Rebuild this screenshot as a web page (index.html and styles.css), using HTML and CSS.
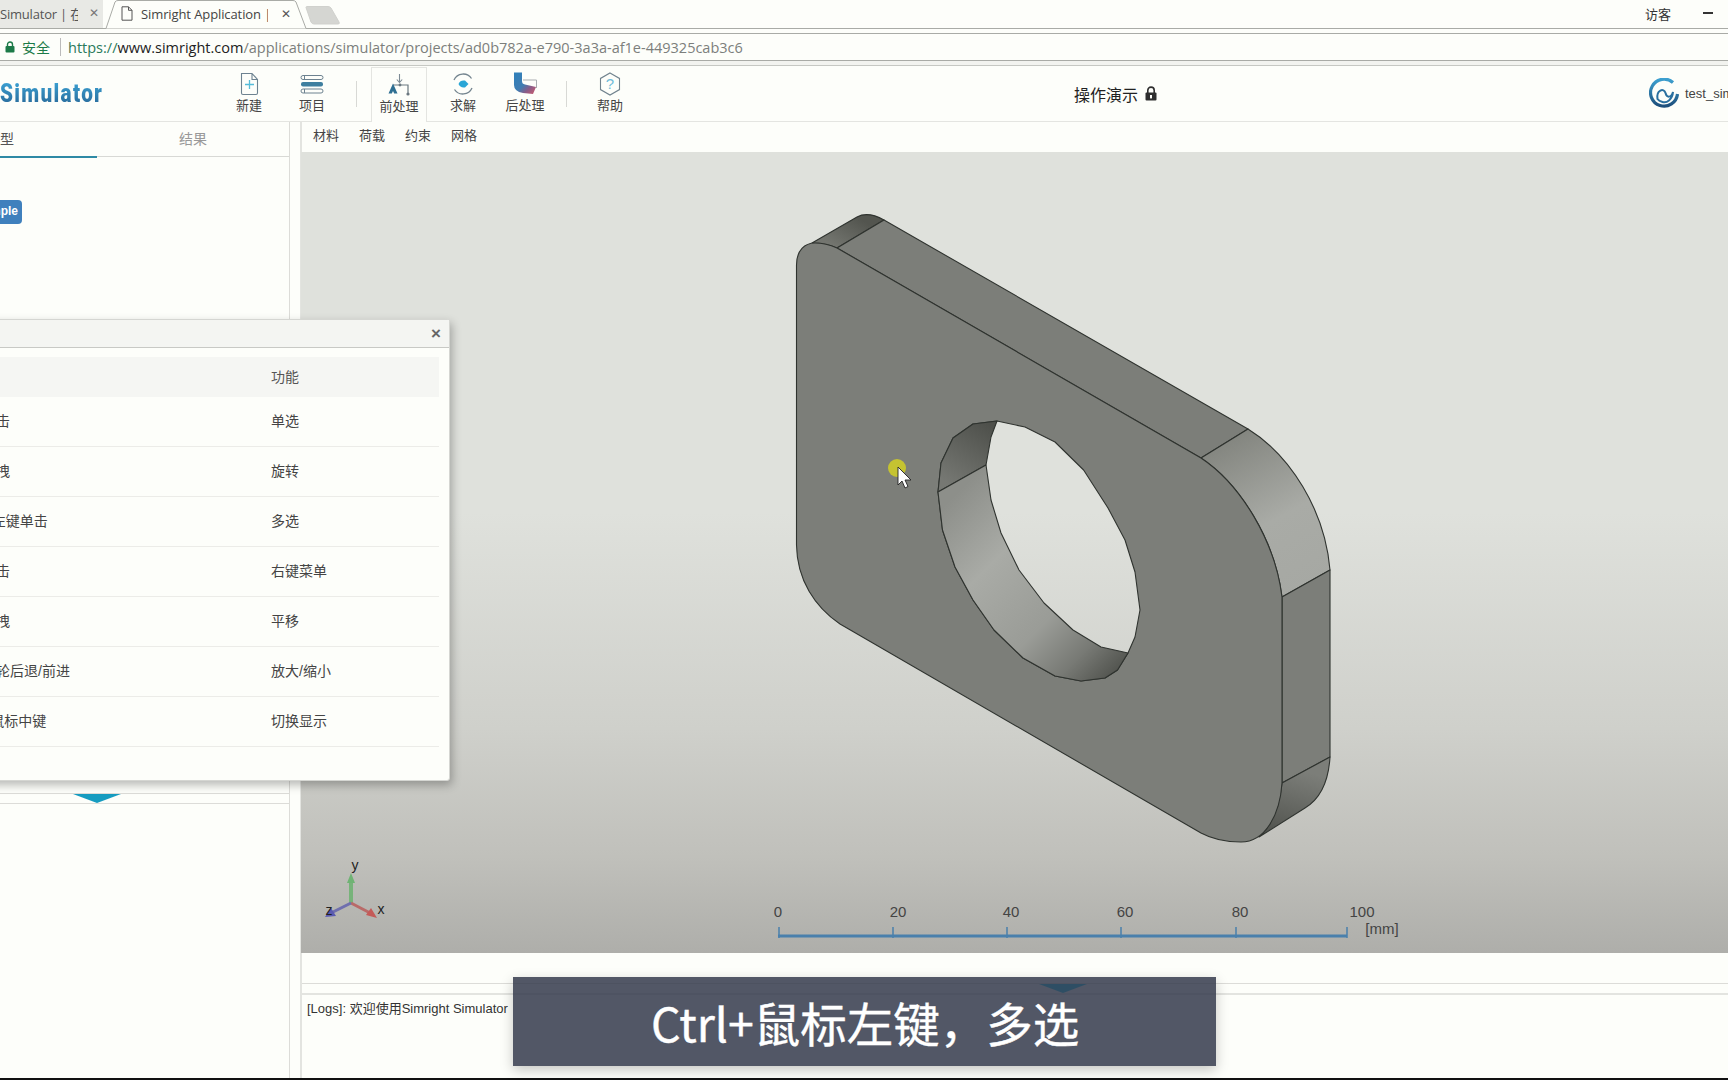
FILE: index.html
```html
<!DOCTYPE html>
<html lang="zh">
<head>
<meta charset="utf-8">
<title>Simright Application</title>
<link rel="stylesheet" href="styles.css">
</head>
<body>
<div class="page">
  <header class="tabstrip">
    <div class="tab tab-inactive">
      <span class="tab-title tab-title-short">Simulator | 在</span>
      <span class="tab-close">✕</span>
    </div>
    <div class="tab tab-active">
      <svg class="tab-shape" viewBox="0 0 205 29" preserveAspectRatio="none"><path d="M0 28.5 H3 L12 2 Q13 .5 15 .5 H190 Q192 .5 193 2 L203 28.5 H205" fill="#fdfefa" stroke="#a9aba6"/></svg>
      <svg class="doc-icon" viewBox="0 0 12 15"><path d="M1 .8 H7.5 L11 4.3 V14.2 H1 Z M7.5 .8 V4.3 H11" fill="none" stroke="#555" stroke-width="1"/></svg>
      <span class="tab-title tab-title-main">Simright Application | S</span>
      <span class="tab-close">✕</span>
    </div>
    <svg class="newtab" viewBox="0 0 35 19"><path d="M1 1.5 Q1 .5 2 .5 H23 Q25 .5 26 2 L34 16 Q35 18 33 18 H9 Q7 18 6 16 Z" fill="#d5d6d2" stroke="#d0d1cd"/></svg>
    <div class="window-tools">
      <span class="visitor">访客</span>
      <span class="minimize"></span>
    </div>
  </header>

  <div class="addressbar">
    <svg class="secure-lock" viewBox="0 0 10 12"><path d="M2.5 5 V3.5 a2.5 2.5 0 0 1 5 0 V5" fill="none" stroke="#1c7a48" stroke-width="1.4"/><rect x=".5" y="5" width="9" height="6.5" rx="1" fill="#1c7a48"/></svg>
    <span class="secure-label">安全</span>
    <span class="addr-sep"></span>
    <span class="url"><span class="url-scheme">https://</span><span class="url-host">www.simright.com</span>/applications/simulator/projects/ad0b782a-e790-3a3a-af1e-449325cab3c6</span>
  </div>
  <div class="chrome-gap"></div>

  <nav class="toolbar">
    <div class="logo">Simulator</div>
    <div class="tools">
      <div class="tool tool-new">
        <svg class="tool-icon" viewBox="0 0 24 24"><path d="M4.5 1.5 H15 L20.5 7.5 V21 Q20.5 22.5 19 22.5 H6 Q4.5 22.5 4.5 21 Z M15 1.5 V7.5 H20.5" fill="#fdfefa" stroke="#6d8290" stroke-width="1.1"/><path d="M12.5 8 V17 M8 12.5 H17" stroke="#55bcd9" stroke-width="1.3"/></svg>
        <span class="tool-label">新建</span>
      </div>
      <div class="tool tool-proj">
        <svg class="tool-icon" viewBox="0 0 24 24"><rect x="1" y="3.5" width="22" height="4" rx="2" fill="#fdfefa" stroke="#6d8290"/><rect x="1" y="10" width="22" height="4.4" rx="2" fill="#3e7f9f"/><rect x="1" y="17" width="22" height="4" rx="2" fill="#fdfefa" stroke="#6d8290"/><path d="M4.5 3.5 V7.5 M4.5 17 V21" stroke="#6d8290"/></svg>
        <span class="tool-label">项目</span>
      </div>
      <span class="tool-sep tool-sep-a"></span>
      <div class="tool tool-active">
        <svg class="tool-icon" viewBox="0 0 24 24"><path d="M12.5 1 V9 M9.8 6.5 L12.5 9.5 L15.2 6.5" fill="none" stroke="#7c8a94" stroke-width="1.1"/><path d="M6 12 H21 V21" fill="none" stroke="#6b7880" stroke-width="1.2"/><path d="M6 10.5 L10.5 20.5 H7.2 L6 18 L4.8 20.5 H1.5 Z" fill="#2e6f92"/><circle cx="21" cy="21" r="1.6" fill="#6b7880"/><circle cx="13" cy="12" r="1.4" fill="#6b7880"/></svg>
        <span class="tool-label">前处理</span>
      </div>
      <div class="tool tool-solve">
        <svg class="tool-icon" viewBox="0 0 24 24"><path d="M20.5 6.5 A10 10 0 0 0 3 8 M3.5 17.5 A10 10 0 0 0 21 16" fill="none" stroke="#74858f" stroke-width="1.3"/><path d="M7.5 12 Q9 8.6 12.5 8.6 H14 L17.5 12 L14 15.4 H12.5 Q9 15.4 7.5 12 Z" fill="#2aa6d6"/></svg>
        <span class="tool-label">求解</span>
      </div>
      <div class="tool tool-post">
        <svg class="tool-icon" viewBox="0 0 24 24"><defs><linearGradient id="postGrad" x1="0" y1="0" x2="1" y2="1"><stop offset="0" stop-color="#2e80ba"/><stop offset=".5" stop-color="#3f7db2"/><stop offset=".72" stop-color="#8a5c88"/><stop offset="1" stop-color="#d05b6c"/></linearGradient></defs><path d="M10 8 H23.5 V16" fill="none" stroke="#a9adb0"/><path d="M1 .5 H9 V9 Q9 12 12 12.5 L23 15 L20 22 L10 21 Q1 19.5 1 13 Z" fill="url(#postGrad)"/></svg>
        <span class="tool-label">后处理</span>
      </div>
      <span class="tool-sep tool-sep-b"></span>
      <div class="tool tool-help">
        <svg class="tool-icon" viewBox="0 0 24 24"><path d="M12 1 L21.5 6.4 V17.6 L12 23 L2.5 17.6 V6.4 Z" fill="#fdfefa" stroke="#71838e" stroke-width="1.1"/><text x="12" y="16.5" text-anchor="middle" class="help-mark">?</text></svg>
        <span class="tool-label">帮助</span>
      </div>
    </div>
    <div class="project-title">
      <span>操作演示</span>
      <svg class="title-lock" viewBox="0 0 12 15"><path d="M2.8 7 V4.3 a3.2 3.2 0 0 1 6.4 0 V7" fill="none" stroke="#2e2e2e" stroke-width="1.6"/><rect x=".5" y="6.5" width="11" height="8" rx="1" fill="#2e2e2e"/><rect x="5" y="9" width="2" height="3.4" fill="#fdfefa"/></svg>
    </div>
    <div class="user">
      <svg class="user-logo" viewBox="0 0 30 32"><defs><linearGradient id="swirl" x1="0" y1="0" x2="0" y2="1"><stop offset="0" stop-color="#3da0d0"/><stop offset="1" stop-color="#1d4f7c"/></linearGradient></defs><path d="M24 4.5 A13.5 13.5 0 1 0 28.5 16" fill="none" stroke="url(#swirl)" stroke-width="3.2"/><path d="M8.5 21 C7 12 15 9.5 16.5 15 C17.8 20 22 20 24 14 C23.5 21 18 25.5 13.5 24 C11 23.3 9.5 22.5 8.5 21 Z" fill="#fdfefa" stroke="#2a6f9f" stroke-width="2"/></svg>
      <span class="user-name">test_simright</span>
    </div>
  </nav>

  <main class="workspace">
    <aside class="sidebar">
      <div class="side-tabs">
        <span class="side-tab side-tab-active">模型</span>
        <span class="side-tab">结果</span>
      </div>
      <div class="side-tree">
        <span class="tree-tag">Sample</span>
      </div>
      <div class="side-split"><span class="split-arrow"></span></div>
      <div class="side-props"></div>
    </aside>

    <section class="stage">
      <div class="menu-row">
        <span>材料</span><span>荷载</span><span>约束</span><span>网格</span>
      </div>
      <div class="viewport">
        <svg class="model" viewBox="301 152 1427 801">
          <defs>
            <linearGradient id="cTop" gradientUnits="userSpaceOnUse" x1="838" y1="248" x2="857" y2="217"><stop offset="0" stop-color="#73756f"/><stop offset="1" stop-color="#53554f"/></linearGradient>
            <linearGradient id="cRight" gradientUnits="userSpaceOnUse" x1="1225" y1="440" x2="1305" y2="590"><stop offset="0" stop-color="#83857f"/><stop offset=".55" stop-color="#a9aba6"/><stop offset="1" stop-color="#a6a8a3"/></linearGradient>
            <linearGradient id="cBot" gradientUnits="userSpaceOnUse" x1="1300" y1="770" x2="1280" y2="840"><stop offset="0" stop-color="#7c7e79"/><stop offset="1" stop-color="#4f514c"/></linearGradient>
            <linearGradient id="cHoleA" gradientUnits="userSpaceOnUse" x1="950" y1="485" x2="990" y2="425"><stop offset="0" stop-color="#767873"/><stop offset="1" stop-color="#4e504b"/></linearGradient>
            <linearGradient id="cHoleB" gradientUnits="userSpaceOnUse" x1="950" y1="500" x2="1125" y2="675"><stop offset="0" stop-color="#8d8f8a"/><stop offset=".3" stop-color="#a9aba6"/><stop offset=".62" stop-color="#9a9c97"/><stop offset=".82" stop-color="#777974"/><stop offset="1" stop-color="#4a4c47"/></linearGradient>
          </defs>
          <g stroke="#2f332f" stroke-width="1.1" stroke-linejoin="round">
            <path d="M812 243 L857 217 Q868 211 884 220 L837 248 Q825 243 812 243 Z" fill="url(#cTop)"/>
            <path d="M884 220 L1248 429 L1201 458 L837 248 Z" fill="#7c7e79"/>
            <path d="M1248 429 C1290 455 1325 510 1330 570 L1282 597 C1275 540 1240 484 1201 458 Z" fill="url(#cRight)"/>
            <path d="M1330 570 V757 L1282 783 V597 Z" fill="#7c7e79"/>
            <path d="M1330 757 C1328 790 1315 802 1305 808 L1259 837 C1270 828 1280 805 1282 783 Z" fill="url(#cBot)"/>
            <path fill-rule="evenodd" fill="#7c7e79" d="M796.5 265 C796.5 250 805 243 815 243 Q826 243 837 248 L1201 458 C1240 484 1275 540 1282 597 V783 C1280 815 1265 842 1241 842 C1228 842 1212 839 1201 833 L840 624 C815 607 797 580 796.5 545 Z M997 421 L973 424 L953 438 L941 463 L938 492 L942.5 530 L955 567 L973 600 L994 630 L1023 658 L1055 676 L1081 681 L1105 678 L1117.5 670 L1128 653 L1135 637 L1140 610 L1135 572 L1125 540 L1108 508 L1083.6 470 L1055 442 L1025 427 Z"/>
            <path d="M997 421 L973 424 L953 438 L941 463 L938 492 L986 465 L991 437 Z" fill="url(#cHoleA)"/>
            <path d="M938 492 L942.5 530 L955 567 L973 600 L994 630 L1023 658 L1055 676 L1081 681 L1105 678 L1117.5 670 L1128 653 L1101 647 L1073 630 L1044 603 L1019 570 L1001 533 L991 500 L986 465 Z" fill="url(#cHoleB)"/>
          </g>
          <circle cx="897" cy="468" r="9" fill="#c5c331"/>
          <path d="M898 467 V485 L902 481 L905 488 L908 486.5 L905 480 L911 480 Z" fill="#fff" stroke="#222" stroke-width=".9"/>
          <g class="axes">
            <path d="M351 903 V881" stroke="#77b37a" stroke-width="4"/><path d="M351 873 L355 883 H347 Z" fill="#6fb374"/>
            <path d="M351 903 L372 914" stroke="#b96a68" stroke-width="3"/><path d="M377 918 L366 915 L371 908 Z" fill="#c45a58"/>
            <path d="M351 903 L331 913" stroke="#6f6fae" stroke-width="3"/><path d="M325 917 L336 916 L331 908 Z" fill="#5a5ab0"/>
            <text x="355" y="870" class="axis-label" text-anchor="middle">y</text>
            <text x="381" y="914" class="axis-label" text-anchor="middle">x</text>
            <text x="329" y="915" class="axis-label" text-anchor="middle">z</text>
          </g>
          <g class="scale">
            <path d="M778 936 H1347 M779 927 V938 M893 927 V938 M1007 927 V938 M1121 927 V938 M1236 927 V938 M1347 927 V938" fill="none" stroke="#4a80ac" stroke-width="1.5"/>
            <path d="M778 936 H1347" stroke="#4a80ac" stroke-width="3"/>
            <text x="778" y="917" class="scale-label" text-anchor="middle">0</text>
            <text x="898" y="917" class="scale-label" text-anchor="middle">20</text>
            <text x="1011" y="917" class="scale-label" text-anchor="middle">40</text>
            <text x="1125" y="917" class="scale-label" text-anchor="middle">60</text>
            <text x="1240" y="917" class="scale-label" text-anchor="middle">80</text>
            <text x="1362" y="917" class="scale-label" text-anchor="middle">100</text>
            <text x="1382" y="934" class="scale-label scale-unit" text-anchor="middle">[mm]</text>
          </g>
        </svg>
      </div>
      <div class="strip"></div>
      <div class="log-split"><span class="split-arrow split-arrow-log"></span></div>
      <div class="logs">[Logs]: 欢迎使用Simright Simulator</div>
    </section>
  </main>
  <div class="floor"></div>

  <section class="dialog">
    <div class="dialog-head"><span class="dialog-close">×</span></div>
    <div class="dialog-body">
      <div class="row row-head"><span class="cell-a">操作</span><span>功能</span></div>
      <div class="row"><span class="cell-a">左键单击</span><span>单选</span></div>
      <div class="row"><span class="cell-a">左键拖拽</span><span>旋转</span></div>
      <div class="row"><span class="cell-a">Ctrl + 左键单击</span><span>多选</span></div>
      <div class="row"><span class="cell-a">右键单击</span><span>右键菜单</span></div>
      <div class="row"><span class="cell-a">右键拖拽</span><span>平移</span></div>
      <div class="row"><span class="cell-a">鼠标滚轮后退/前进</span><span>放大/缩小</span></div>
      <div class="row"><span class="cell-a">Shift+鼠标中键</span><span>切换显示</span></div>
    </div>
  </section>

  <div class="caption">Ctrl+鼠标左键，多选</div>
</div>
</body>
</html>
```
FILE: styles.css
```css
* { box-sizing: border-box; }
html, body { margin: 0; padding: 0; height: 100%; overflow: hidden; }
body { background: #fdfefa; color: #333; font-family: "Liberation Sans", "Noto Sans CJK SC", sans-serif; font-size: 13px; }
.page { position: relative; width: 1728px; height: 1080px; overflow: hidden; display: flex; flex-direction: column; }

/* browser chrome */
.tabstrip { height: 29px; flex: none; display: flex; align-items: stretch; position: relative; border-bottom: 1px solid #a9aba6; }
.tab { display: flex; align-items: center; position: relative; padding-bottom: 2px; font-family: "Open Sans", "Noto Sans CJK SC", sans-serif; font-size: 13px; color: #444; }
.tab-inactive { width: 103px; background: #e8e9e5; flex: none; }
.tab-active { width: 205px; flex: none; margin-bottom: -1px; }
.tab-shape { position: absolute; left: 0; top: 0; width: 100%; height: 100%; }
.doc-icon { position: relative; width: 12px; height: 15px; margin-left: 18px; flex: none; }
.tab-title { position: relative; white-space: nowrap; overflow: hidden; }
.tab-title-short { width: 78px; color: #555; letter-spacing: -.2px; }
.tab-title-main { width: 127px; margin-left: 8px; letter-spacing: -.1px; }
.tab-close { position: relative; font-size: 12px; color: #555; font-family: "DejaVu Sans", sans-serif; font-weight: 700; }
.tab-inactive .tab-close { margin-left: 11px; color: #777; }
.tab-active .tab-close { margin-left: 13px; }
.newtab { width: 35px; height: 19px; margin: 6px 0 0 -3px; flex: none; }
.window-tools { margin-left: auto; display: flex; align-items: center; padding: 0 15px 2px 0; }
.visitor { font-size: 13px; color: #333; width: 28px; }
.minimize { width: 10px; height: 2px; background: #333; margin-left: 30px; }

.addressbar { height: 28px; flex: none; display: flex; align-items: center; padding: 0 0 0 5px; border-top: 1px solid #a9aba6; border-bottom: 1px solid #a9aba6; margin-top: 4px; }
.secure-lock { width: 10px; height: 12px; flex: none; }
.secure-label { color: #1c7a48; margin-left: 7px; font-size: 14px; }
.addr-sep { width: 1px; height: 18px; background: #bbb; margin: 0 7px 0 10px; }
.url { font-family: "Open Sans", sans-serif; font-size: 14.5px; color: #7c7f7c; }
.url-scheme { color: #2b7a5b; }
.url-host { color: #222; }
.chrome-gap { height: 5px; flex: none; background: #f2f3ef; border-bottom: 1px solid #c6c8c3; }

/* app toolbar */
.toolbar { height: 56px; flex: none; display: flex; align-items: stretch; border-bottom: 1px solid #e4e5e1; background: #fdfefa; }
.logo { width: 227px; flex: none; padding-top: 13px; font-family: "Roboto", sans-serif; font-weight: 900; font-size: 25px; letter-spacing: 1.6px; transform: scaleX(.83); transform-origin: left center; line-height: 30px; background: linear-gradient(180deg, transparent 12px, #3a9ed0 17px, #2a6f9f 37px); -webkit-background-clip: text; background-clip: text; color: transparent; }
.tools { display: flex; align-items: stretch; width: 400px; flex: none; }
.tool { display: flex; flex-direction: column; align-items: center; width: 62px; flex: none; padding-top: 6px; margin-left: 1px; }
.tool-icon { width: 24px; height: 24px; flex: none; }
.tool-label { font-size: 13px; line-height: 18px; color: #444; font-family: "Noto Sans CJK SC", sans-serif; }
.tool-sep { width: 1px; height: 26px; background: #d8d9d5; margin: 15px 14px 0 13px; flex: none; }
.tool-sep-b { margin: 15px 12px 0 10px; }
.tool-new { margin-left: -9px; }
.tool-proj { margin-left: 1px; }
.tool-active { width: 56px; margin-left: 0; height: 55px; margin-top: 1px; padding-top: 5px; background: #fdfefa; border: 1px solid #e4e5e1; border-bottom: 0; position: relative; z-index: 1; }
.tool-solve { margin-left: 5px; }
.tool-post { margin-left: 0; }
.tool-help { margin-left: 0; }
.help-mark { font-size: 15px; fill: #6fbcd9; font-family: "Liberation Sans", sans-serif; }
.project-title { margin-left: 447px; width: 100px; display: flex; align-items: center; flex: none; font-size: 16px; color: #222; font-family: "Noto Sans CJK SC", sans-serif; }
.project-title span { white-space: nowrap; }
.title-lock { width: 12px; height: 15px; margin-left: 7px; flex: none; }
.user { margin-left: 475px; display: flex; align-items: center; flex: none; }
.user-logo { width: 30px; height: 32px; flex: none; }
.user-name { margin-left: 6px; color: #444; font-size: 13px; white-space: nowrap; }

/* workspace */
.workspace { flex: 1; min-height: 0; display: flex; }
.sidebar { width: 290px; flex: none; display: flex; flex-direction: column; border-right: 1px solid #dcdcd8; }
.side-tabs { height: 35px; flex: none; display: flex; border-bottom: 1px solid #d8d9d5; }
.side-tab { width: 96px; text-align: center; line-height: 34px; color: #999; font-size: 14px; flex: none; }
.side-tab-active { width: 97px; color: #555; text-align: left; text-indent: -14px; height: 36px; border-bottom: 2px solid #2e8aa5; }
.side-tab:not(.side-tab-active) { margin-left: 48px; }
.side-tree { flex: none; height: 636px; padding-top: 43px; overflow: hidden; }
.tree-tag { display: block; width: 22px; height: 24px; border-radius: 0 4px 4px 0; background: #3f80bd; color: #fff; font-weight: 700; font-size: 12px; line-height: 22px; direction: rtl; padding-right: 4px; overflow: hidden; white-space: nowrap; }
.side-split { height: 11px; flex: none; border-top: 1px solid #dcdcd8; border-bottom: 1px solid #dcdcd8; display: flex; padding-left: 73px; }
.split-arrow { display: block; width: 0; height: 0; border-left: 24px solid transparent; border-right: 24px solid transparent; border-top: 9px solid #169cc0; }
.side-props { flex: 1; }

.stage { flex: 1; min-width: 0; display: flex; flex-direction: column; margin-left: 10px; border-left: 2px solid #e3e4e0; }
.menu-row { height: 30px; flex: none; display: flex; gap: 20px; padding-left: 11px; align-items: center; line-height: 1; font-size: 13px; color: #444; }
.menu-row span { padding-bottom: 3px; }
.viewport { height: 801px; flex: none; margin-left: -1px; background: linear-gradient(180deg, #dfe1dc 0%, #dfe1dc 45%, #cfd0cb 72%, #c0c0bb 88%, #aeaeaa 100%); }
.model { display: block; width: 100%; height: 100%; }
.axis-label { font-size: 14px; font-family: "Liberation Sans", sans-serif; fill: #222; }
.scale-label { font-size: 15px; font-family: "Liberation Sans", sans-serif; fill: #444; }
.strip { height: 30px; flex: none; }
.log-split { height: 12px; flex: none; border-top: 1px solid #dcdcd8; border-bottom: 2px solid #e3e4e0; padding-left: 737px; }
.split-arrow-log { border-top-color: #0fc0ee; }
.logs { flex: 1; padding: 6px 5px; font-size: 13px; line-height: 16px; color: #333; }
.floor { height: 2px; flex: none; background: #111; }

/* help dialog */
.dialog { position: absolute; left: -56px; top: 319px; width: 506px; height: 462px; background: #fdfefa; border: 1px solid #d5d6d2; border-radius: 3px; box-shadow: 2px 4px 10px rgba(0,0,0,.28); }
.dialog-head { height: 28px; background: #f4f5f2; border-bottom: 1px solid #c8c9c5; display: flex; justify-content: flex-end; align-items: center; padding-right: 8px; }
.dialog-close { font-weight: 700; font-size: 17px; line-height: 1; color: #666; }
.dialog-body { padding: 9px 10px 0 9px; }
.row { display: grid; grid-template-columns: 317px 1fr; height: 50px; padding-bottom: 4px; align-items: center; border-bottom: 1px solid #ececE8; color: #444; font-size: 14px; }
.row-head { height: 40px; padding-bottom: 3px; background: #f5f6f3; border-bottom: 0; color: #555; }

/* video caption */
.caption { position: absolute; left: 513px; top: 977px; width: 703px; height: 89px; padding-left: 138px; background: rgba(52,57,75,.85); box-shadow: 0 4px 12px rgba(0,0,0,.22); color: #fff; -webkit-text-stroke: .4px #fff; font-family: "Noto Sans CJK SC", sans-serif; font-size: 46.5px; line-height: 89px; white-space: nowrap; }
```
